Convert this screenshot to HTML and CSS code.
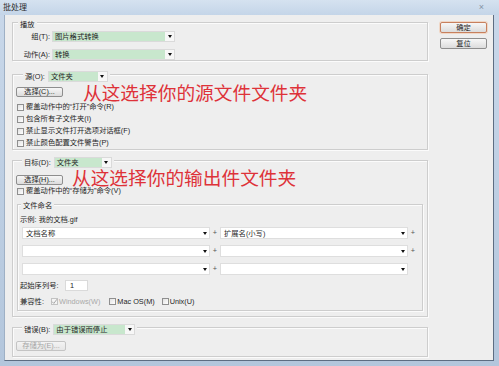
FILE: index.html
```html
<!DOCTYPE html>
<html lang="zh">
<head>
<meta charset="utf-8">
<title>批处理</title>
<link rel="stylesheet" href="styles.css">
</head>
<body>
<div class="window">
  <div class="titlebar">
    <span class="title">批处理</span>
    <span class="close">×</span>
  </div>
  <div class="client">
    <div class="main">
      <div class="group g-play">
        <div class="legend l-play">播放</div>
        <div class="field-row r1">
          <span class="flabel">组(T):</span>
          <span class="sel w-set"><span class="val">图片格式转换</span><span class="arr"></span></span>
        </div>
        <div class="field-row r2">
          <span class="flabel">动作(A):</span>
          <span class="sel w-set"><span class="val">转换</span><span class="arr"></span></span>
        </div>
      </div>

      <div class="group g-src">
        <div class="legend l-src">
          <span>源(O):</span>
          <span class="sel w-src"><span class="val">文件夹</span><span class="arr"></span></span>
        </div>
        <div class="note n1">从这选择你的源文件文件夹</div>
        <button class="btn b-choose">选择(C)...</button>
        <div class="checks">
          <div class="chk"><span class="box"></span><span>覆盖动作中的“打开”命令(R)</span></div>
          <div class="chk"><span class="box"></span><span>包含所有子文件夹(I)</span></div>
          <div class="chk"><span class="box"></span><span>禁止显示文件打开选项对话框(F)</span></div>
          <div class="chk"><span class="box"></span><span>禁止颜色配置文件警告(P)</span></div>
        </div>
      </div>

      <div class="group g-dst">
        <div class="legend l-dst">
          <span>目标(D):</span>
          <span class="sel w-dst"><span class="val">文件夹</span><span class="arr"></span></span>
        </div>
        <div class="note n2">从这选择你的输出件文件夹</div>
        <button class="btn b-choose b-choose2">选择(H)...</button>
        <div class="chk"><span class="box"></span><span>覆盖动作中的“存储为”命令(V)</span></div>

        <div class="subgroup">
          <div class="legend l-name">文件命名</div>
          <div class="example">示例: 我的文档.gif</div>
          <div class="name-row nr1">
            <span class="sel white w-name"><span class="val">文档名称</span><span class="arr"></span></span>
            <span class="plus">+</span>
            <span class="sel white w-name"><span class="val">扩展名(小写)</span><span class="arr"></span></span>
            <span class="plus">+</span>
          </div>
          <div class="name-row">
            <span class="sel white w-name"><span class="val"></span><span class="arr"></span></span>
            <span class="plus">+</span>
            <span class="sel white w-name"><span class="val"></span><span class="arr"></span></span>
            <span class="plus">+</span>
          </div>
          <div class="name-row">
            <span class="sel white w-name"><span class="val"></span><span class="arr"></span></span>
            <span class="plus">+</span>
            <span class="sel white w-name"><span class="val"></span><span class="arr"></span></span>
          </div>
          <div class="seq-row">
            <span class="seq-label">起始序列号:</span>
            <span class="num">1</span>
          </div>
          <div class="compat-row">
            <span class="compat-label">兼容性:</span>
            <span class="citem disabled"><span class="box checked"><svg viewBox="0 0 7 7" width="7" height="7"><path d="M1 3.6 L2.8 5.4 L6 1.2" fill="none" stroke="#a8a8a8" stroke-width="1"/></svg></span><span>Windows(W)</span></span>
            <span class="citem ci-mac"><span class="box"></span><span>Mac OS(M)</span></span>
            <span class="citem ci-unix"><span class="box"></span><span>Unix(U)</span></span>
          </div>
        </div>
      </div>

      <div class="group g-err">
        <div class="legend l-err">
          <span>错误(B):</span>
          <span class="sel w-err"><span class="val">由于错误而停止</span><span class="arr"></span></span>
        </div>
        <button class="btn b-save" disabled>存储为(E)...</button>
      </div>
    </div>

    <div class="side">
      <button class="btn side-btn default">确定</button>
      <button class="btn side-btn">复位</button>
    </div>
  </div>
</div>
</body>
</html>
```

FILE: styles.css
```css
html, body {
  margin: 0;
  padding: 0;
}

body {
  width: 499px;
  height: 366px;
  overflow: hidden;
  font-family: "Liberation Sans", "Noto Sans CJK SC", sans-serif;
  font-size: 7.3px;
  color: #1f1f1f;
}

.window {
  width: 499px;
  height: 366px;
  background: linear-gradient(#c9d8ea, #b3c6dc);
  display: flex;
  flex-direction: column;
}

.titlebar {
  height: 15px;
  flex: none;
  display: flex;
  align-items: center;
  justify-content: space-between;
  padding: 0 15px 0 3px;
  background: linear-gradient(#d5e2f0, #c4d5e8);
}

.title {
  font-size: 8px;
  line-height: 10px;
  color: #2a2a2a;
}

.close {
  font-size: 9px;
  line-height: 9px;
  color: #8593a4;
}

.client {
  flex: none;
  margin: 0 5px 0 4px;
  height: 346px;
  box-sizing: border-box;
  background: #eeeeee;
  border-left: 1px solid #9eb0c5;
  border-right: 1px solid #5d6d82;
  border-bottom: 1px solid #5d6d82;
  display: flex;
}

.main {
  width: 423px;
  flex: none;
  padding-left: 7px;
  box-sizing: border-box;
  display: flex;
  flex-direction: column;
  align-items: flex-start;
}

.side {
  display: flex;
  flex-direction: column;
  gap: 5px;
  padding: 7px 0 0 12px;
}

/* group boxes */
.group, .subgroup {
  position: relative;
  box-sizing: border-box;
  border: 1px solid #cdcdcd;
  box-shadow: inset 1px 1px 0 #fbfbfb, 1px 1px 0 #fbfbfb;
  display: flex;
  flex-direction: column;
  align-items: flex-start;
}

.group {
  width: 416px;
}

.g-play { margin-top: 7px; }
.g-src  { margin-top: 13px; }
.g-dst  { margin-top: 10px; padding-bottom: 5px; }
.g-err  { margin-top: 10px; padding-bottom: 5px; }

.legend {
  display: flex;
  align-items: center;
  gap: 3px;
  height: 11px;
  margin-top: -4px;
  padding: 0 2px;
  background: #eeeeee;
  line-height: 10px;
  white-space: nowrap;
}

.l-play { margin-left: 5px; }
.l-src  { margin-left: 10px; }
.l-dst  { margin-left: 9px; }
.l-err  { margin-left: 9px; }
.l-name { margin-left: 3px; height: 10px; }

/* rows in play group */
.field-row {
  display: flex;
  align-items: center;
  gap: 2px;
  height: 11px;
}
.r1 { margin-top: 1px; }
.r2 { margin-top: 7px; }

.flabel {
  width: 37px;
  text-align: right;
  line-height: 10px;
}

/* dropdowns */
.sel {
  display: flex;
  height: 11px;
  box-sizing: border-box;
  border: 1px solid #dadada;
  background: #f7f7f7;
}

.sel .val {
  flex: 1;
  display: flex;
  align-items: center;
  padding-left: 2px;
  background: #c8e7cd;
  line-height: 9px;
  white-space: nowrap;
  overflow: hidden;
}

.sel .arr {
  width: 9px;
  flex: none;
  display: flex;
  align-items: center;
  justify-content: center;
}

.sel .arr::before {
  content: "";
  border-left: 2.5px solid transparent;
  border-right: 2.5px solid transparent;
  border-top: 3px solid #111111;
}

.sel.white {
  background: #ffffff;
  border-color: #dedede;
  height: 12px;
}
.sel.white .val { background: #ffffff; padding-left: 3px; }

.w-set  { width: 123px; }
.w-src  { width: 60px; }
.w-dst  { width: 58px; }
.w-err  { width: 82px; }
.w-name { width: 188px; }

/* buttons */
.btn {
  font: inherit;
  color: #1f1f1f;
  padding: 0;
  margin: 0;
  box-sizing: border-box;
  height: 10px;
  line-height: 8px;
  border: 1px solid #8e8e8e;
  border-radius: 2px;
  background: linear-gradient(#f7f7f7, #dcdcdc);
  white-space: nowrap;
}

.b-choose {
  width: 47px;
  margin: 5px 0 0 3px;
}
.b-choose2 { margin-top: 7px; }

.b-save {
  width: 50px;
  margin: 6px 0 0 3px;
  color: #a5a5a5;
  border-color: #c4c4c4;
  background: linear-gradient(#f3f3f3, #e6e6e6);
}

.side-btn {
  width: 47px;
  height: 11px;
  line-height: 9px;
}
.side-btn.default {
  border-color: #c7805e;
  box-shadow: 0 0 0 1px #f0d7c6;
}

/* checkboxes */
.checks {
  margin-top: 4px;
  display: flex;
  flex-direction: column;
}

.chk {
  display: flex;
  align-items: center;
  gap: 2px;
  height: 12px;
  margin-left: 4px;
  line-height: 10px;
  white-space: nowrap;
}

.box {
  width: 7px;
  height: 7px;
  box-sizing: border-box;
  border: 1px solid #8f8f8f;
  background: linear-gradient(135deg, #e2e2e2, #ffffff);
  flex: none;
  display: flex;
  align-items: center;
  justify-content: center;
}
.box svg { display: block; flex: none; }
.box.checked { border-color: #c2c2c2; background: #f4f4f4; }

/* red annotations */
.note {
  position: absolute;
  font-family: "Noto Sans CJK SC", sans-serif;
  font-size: 18.7px;
  line-height: 15px;
  color: #de3239;
  white-space: nowrap;
}
.n1 { left: 70px; top: 9px; }
.n2 { left: 59px; top: 8px; }

/* file naming subgroup */
.subgroup {
  width: 406px;
  margin: 7px 0 0 4px;
  padding-bottom: 3px;
}

.example {
  margin: 3px 0 0 2px;
  height: 11px;
  line-height: 11px;
}

.name-row {
  display: flex;
  align-items: center;
  margin: 6px 0 0 4px;
  height: 12px;
}
.nr1 { margin-top: 2px; }

.plus {
  width: 10px;
  text-align: center;
  color: #555555;
  line-height: 10px;
}

.seq-row {
  display: flex;
  align-items: center;
  margin: 5px 0 0 2px;
  height: 11px;
  gap: 3px;
}
.seq-label { width: 42px; line-height: 10px; }

.num {
  width: 23px;
  height: 11px;
  box-sizing: border-box;
  border: 1px solid #dadada;
  background: #ffffff;
  padding-left: 4px;
  display: flex;
  align-items: center;
  line-height: 9px;
}

.compat-row {
  display: flex;
  align-items: center;
  margin: 5px 0 0 2px;
  height: 11px;
  line-height: 10px;
  white-space: nowrap;
}
.compat-label { width: 31px; }

.citem {
  display: flex;
  align-items: center;
  gap: 1px;
}
.citem.disabled { color: #a9a9a9; }
.ci-mac { margin-left: 9px; }
.ci-unix { margin-left: 7px; }
```
